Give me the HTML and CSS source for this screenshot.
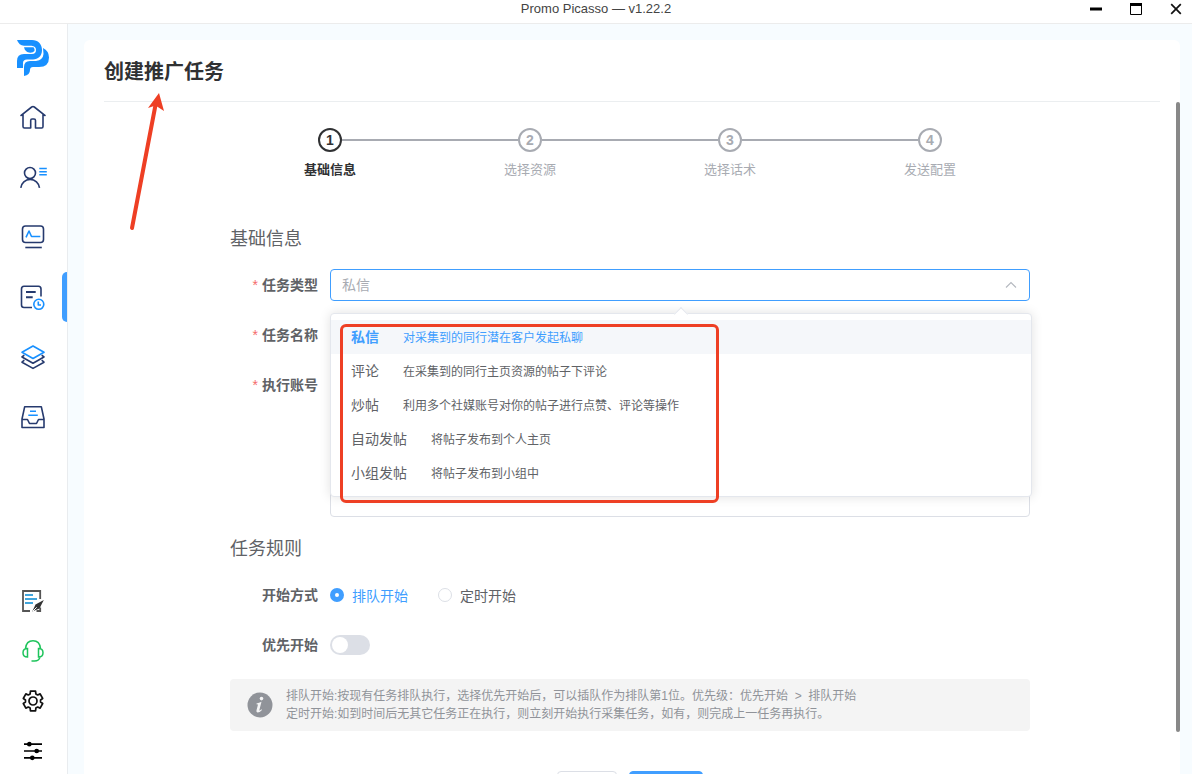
FILE: index.html
```html
<!DOCTYPE html>
<html lang="zh-CN">
<head>
<meta charset="utf-8">
<title>Promo Picasso</title>
<link rel="stylesheet" href="styles.css">
</head>
<body>
<header class="titlebar">
  <span class="titlebar-text">Promo Picasso — v1.22.2</span>
  <div class="window-controls">
    <button type="button" aria-label="最小化"><svg width="12" height="12" viewBox="0 0 12 12"><path d="M0 6h12" stroke="#000" stroke-width="3"/></svg></button>
    <button type="button" aria-label="最大化"><svg width="12" height="12" viewBox="0 0 12 12"><path d="M.5 1v10.500h11V1" fill="none" stroke="#000"/><path d="M0 1.500h12" stroke="#000" stroke-width="3"/></svg></button>
    <button type="button" aria-label="关闭"><svg width="12" height="12" viewBox="0 0 12 12"><path d="M1.200 1.200l9.600 9.600M10.800 1.200l-9.600 9.600" stroke="#111" stroke-width="1.700"/></svg></button>
  </div>
</header>
<div class="shell">
  <aside class="sidebar">
    <div class="logo">
      <svg width="32" height="36" viewBox="0 0 32 36" fill="#1890ff"><path d="M0 0H15C21 0 25 4 25 10C25 16 21 19.500 16 19.500H10Q6 19.500 6 23V28H0V21Q0 14 7 14H15Q19 14 19 10Q19 6 14.500 5.700H7Q2 5.500 0 0Z"/><path d="M7 7.200H16.500Q18 9 17.500 11Q16 13 12 12.600Q8 11.500 7 7.200Z"/><path d="M26 8Q32 11 32 17.500Q32 27 22 27H16Q13 27 13 30Q13 35 7 36V27Q7 21 13 21H19Q26 20 26.500 14Z"/></svg>
    </div>
    <nav class="nav">
      <button type="button" class="nav-item" aria-label="首页"><svg class="line-icon" viewBox="0 0 28 28"><path d="M1.500 12.800L12.700 4Q14 3 15.300 4L26.500 12.800M4 11.500V23.500Q4 25 5.500 25H11.700V17.500Q11.700 16 13 16H15Q16.500 16 16.500 17.500V25H22.700Q24 25 24 23.500V11.500"/></svg></button>
      <button type="button" class="nav-item" aria-label="账号"><svg class="line-icon" viewBox="0 0 28 28"><circle cx="11" cy="10" r="5.500"/><path d="M1.800 24.800A9.400 9.400 0 0 1 20.500 24.800"/><path class="accent" d="M20.300 5.500h7.500M20.300 8.700h7.500M20.300 11.800h7.500"/></svg></button>
      <button type="button" class="nav-item" aria-label="监控"><svg class="line-icon" viewBox="0 0 28 28"><rect x="3.500" y="3" width="21" height="16.500" rx="3"/><path d="M6.300 24.500h16.500"/><path class="accent" d="M7 14.300L10 8l2.500 5.500H21.300"/></svg></button>
      <button type="button" class="nav-item is-active" aria-label="任务"><svg class="line-icon" viewBox="0 0 28 28"><path d="M13 24.500H5Q2.500 24.500 2.500 22V6Q2.500 3.300 5 3.300H19.500Q22 3.300 22 6V13.500"/><path d="M7 9h9.700M7 14.300h6.700" stroke-width="2"/><circle class="accent" cx="19.800" cy="21.300" r="5"/><path class="accent" d="M19.300 18.500V22H22"/></svg></button>
      <button type="button" class="nav-item" aria-label="资源"><svg class="line-icon" viewBox="0 0 28 28"><path class="accent" d="M14 3L25 9.300L14 15.500L3 9.300Z"/><path d="M5.300 12.200L3 14L14 20.200L25 14L22.700 12.200M5.300 17.200L3 19.200L14 25.400L25 19.200L22.700 17.200"/></svg></button>
      <button type="button" class="nav-item" aria-label="收件箱"><svg class="line-icon" viewBox="0 0 28 28"><path d="M5.700 3.700H22.300L25 16V24.500H3V16ZM3 16.500H8.500L10.500 20.500H17.500L19.500 16.500H25"/><path class="accent" d="M11 8.300h6M9.300 12.300h9.500"/></svg></button>
    </nav>
    <div class="tools">
      <button type="button" aria-label="记录"><svg width="22" height="22" viewBox="0 0 22 22" fill="none"><path d="M18.200 9V1H1V21H8M14.500 21H18.200V17.500" stroke="#555" stroke-width="1.800"/><path d="M3 5h8M3 9h12M3 13h8" stroke="#41a5dc" stroke-width="2"/><path d="M21.800 10L13.500 14.500L10.300 21.500L17.500 18.500Z" fill="#333"/><path d="M11 21l3.700-3.700" stroke="#fff" stroke-width="1"/></svg></button>
      <button type="button" aria-label="客服"><svg width="22" height="22" viewBox="0 0 22 22" fill="none" stroke="#1fc45c" stroke-width="1.500"><path d="M3.500 8.500C4 3.500 7 .8 11 .8S18 3.500 18.500 8.500M5.500 8.500V17C2.500 17 1 15.200 1 12.700S2.500 8.500 5.500 8.500ZM16.500 8.500V17C19.500 17 21 15.200 21 12.700S19.500 8.500 16.500 8.500ZM18 16.800C17.500 19.500 15.500 21 12.500 21H9.500"/></svg></button>
      <button type="button" aria-label="设置"><svg width="22" height="22" viewBox="0 0 22 22" fill="none" stroke="#111" stroke-width="1.700" stroke-linejoin="round"><path d="M8.150 3.950L8.440 1.200H13.560L13.850 3.950L15.680 5.010L18.150 3.900L20.700 8.500L18.530 9.940V12.060L20.700 13.500L18.150 18.100L15.680 16.990L13.850 18.050L13.560 20.800H8.440L8.150 18.050L6.320 16.990L3.850 18.100L1.300 13.500L3.470 12.060V9.940L1.300 8.500L3.850 3.900L6.320 5.010Z"/><circle cx="11" cy="11" r="4"/></svg></button>
      <button type="button" aria-label="偏好"><svg width="22" height="22" viewBox="0 0 22 22" fill="#000" stroke="#000" stroke-width="1.700"><path d="M2 4.200h18M2 11h18M2 17.800h18"/><circle cx="7.300" cy="4.200" r="1.500"/><circle cx="14.700" cy="11" r="1.500"/><circle cx="10.300" cy="17.800" r="1.500"/></svg></button>
    </div>
  </aside>
  <main class="main">
    <section class="card">
      <h1 class="card-title">创建推广任务</h1>
      <svg class="note-arrow" width="40" height="140" viewBox="0 0 40 140"><path d="M7 135L30.500 12" stroke="#ee3f24" stroke-width="4" stroke-linecap="round"/><path d="M34 0L23 15L30.500 12.500L39 18Z" fill="#ee3f24"/></svg>
      <div class="scroll">
        <div class="content">
          <ol class="steps">
            <li class="step is-current"><span class="step-num">1</span><span class="step-name">基础信息</span></li>
            <li class="step"><span class="step-num">2</span><span class="step-name">选择资源</span></li>
            <li class="step"><span class="step-num">3</span><span class="step-name">选择话术</span></li>
            <li class="step"><span class="step-num">4</span><span class="step-name">发送配置</span></li>
          </ol>
          <form class="form">
            <h2 class="section-title">基础信息</h2>
            <div class="row">
              <label class="label required" for="type">任务类型</label>
              <div class="field select-wrap">
                <select id="type" class="input select"><option>私信</option><option>评论</option><option>炒帖</option><option>自动发帖</option><option>小组发帖</option></select>
                <svg class="chevron" width="12" height="8" viewBox="0 0 12 8"><path d="M1 6.500L6 1.500L11 6.500" fill="none" stroke="#b4b8bf" stroke-width="1.100"/></svg>
                <div class="popper">
                  <ul class="options" role="listbox" aria-label="任务类型">
                    <li class="option is-selected" role="option" aria-selected="true"><span>私信</span><small>对采集到的同行潜在客户发起私聊</small></li>
                    <li class="option" role="option"><span>评论</span><small>在采集到的同行主页资源的帖子下评论</small></li>
                    <li class="option" role="option"><span>炒帖</span><small>利用多个社媒账号对你的帖子进行点赞、评论等操作</small></li>
                    <li class="option" role="option"><span>自动发帖</span><small>将帖子发布到个人主页</small></li>
                    <li class="option" role="option"><span>小组发帖</span><small>将帖子发布到小组中</small></li>
                  </ul>
                  <div class="note-box"></div>
                </div>
              </div>
            </div>
            <div class="row">
              <label class="label required" for="name">任务名称</label>
              <div class="field"><input id="name" class="input" type="text"></div>
            </div>
            <div class="row">
              <label class="label required" for="accounts">执行账号</label>
              <div class="field"><textarea id="accounts" class="input accounts"></textarea></div>
            </div>
            <h2 class="section-title">任务规则</h2>
            <div class="row">
              <span class="label" id="start-label">开始方式</span>
              <div class="field radios" role="radiogroup" aria-labelledby="start-label">
                <label class="radio"><input type="radio" name="start" checked><span>排队开始</span></label>
                <label class="radio"><input type="radio" name="start"><span>定时开始</span></label>
              </div>
            </div>
            <div class="row">
              <label class="label" for="priority">优先开始</label>
              <div class="field radios"><input id="priority" class="switch" type="checkbox" role="switch"></div>
            </div>
            <div class="alert">
              <svg width="26" height="26" viewBox="0 0 26 26"><circle cx="13" cy="13" r="12.500" fill="#909399"/><circle cx="14.500" cy="6.600" r="1.800" fill="#f4f4f5"/><path d="M9.500 11.500Q12 10.800 14.500 9.800L12.300 18.200Q12.100 19.300 14.500 17.300L15 18Q12.500 20.700 10.500 20.600Q9 20.300 9.500 18.300L11 12.500L9.500 12.200Z" fill="#f4f4f5"/></svg>
              <p class="alert-text">排队开始:按现有任务排队执行，选择优先开始后，可以插队作为排队第1位。优先级：优先开始 &nbsp;&gt;&nbsp; 排队开始<br>定时开始:如到时间后无其它任务正在执行，则立刻开始执行采集任务，如有，则完成上一任务再执行。</p>
            </div>
            <div class="actions">
              <button type="button" class="btn" aria-label="取消"></button>
              <button type="button" class="btn btn-primary" aria-label="下一步"></button>
            </div>
          </form>
        </div>
        <div class="scrollbar"></div>
      </div>
    </section>
  </main>
</div>
</body>
</html>
```
FILE: styles.css
```css
* { box-sizing: border-box; }
body {
  margin: 0;
  height: 100vh;
  overflow: hidden;
  display: flex;
  flex-direction: column;
  font-family: "Liberation Sans", "Noto Sans CJK SC", sans-serif;
  font-size: 14px;
  color: #606266;
  background: #fff;
}
button, input, select, textarea { font: inherit; }
svg { display: block; }

.titlebar {
  position: relative;
  flex: none;
  display: flex;
  justify-content: center;
  height: 24px;
  border-bottom: 1px solid #ececec;
}
.titlebar-text { font-size: 13px; line-height: 17px; color: #444; }
.window-controls {
  position: absolute;
  top: 3px;
  right: 10px;
  display: flex;
  gap: 28px;
}
.window-controls button, .tools button, .nav-item {
  padding: 0;
  border: 0;
  background: none;
}

.shell { flex: 1; min-height: 0; display: flex; }
.sidebar {
  flex: none;
  width: 68px;
  display: flex;
  flex-direction: column;
  border-right: 1px solid #e9ecef;
}
.logo { height: 63px; padding: 16px 0 0 17px; }
.nav { display: flex; flex-direction: column; }
.nav-item {
  position: relative;
  height: 60px;
  padding-left: 19px;
}
.nav-item.is-active::after {
  content: "";
  position: absolute;
  top: 5px;
  right: 0;
  width: 5px;
  height: 50px;
  border-radius: 5px 0 0 5px;
  background: #409eff;
}
.line-icon {
  width: 28px;
  height: 28px;
  fill: none;
  stroke: #263a6e;
  stroke-width: 1.6px;
  stroke-linejoin: round;
}
.line-icon .accent { stroke: #1890ff; }
.tools {
  margin-top: auto;
  padding: 0 0 12px 22px;
  display: flex;
  flex-direction: column;
  align-items: flex-start;
  gap: 28px;
}

.main {
  flex: 1;
  min-width: 0;
  display: flex;
  padding: 16px 12px 0 16px;
  background: #f7fcff;
}
.card {
  position: relative;
  flex: 1;
  min-width: 0;
  display: flex;
  flex-direction: column;
  border-radius: 6px 6px 0 0;
  background: #fff;
}
.card-title {
  flex: none;
  height: 62px;
  margin: 0 20px;
  border-bottom: 1px solid #ebeef0;
  font-size: 20px;
  line-height: 64px;
  color: #303133;
}
.note-arrow { position: absolute; left: 41px; top: 53px; z-index: 3; }
.scroll { flex: 1; min-height: 0; display: flex; overflow: hidden; }
.scrollbar {
  flex: none;
  width: 4px;
  height: 630px;
  border-radius: 2px;
  background: #888;
}
.content { flex: 1; min-width: 0; padding: 26px 20px 0; }

.steps, .form { max-width: 800px; margin: 0 auto; }
.steps { display: flex; padding: 0; list-style: none; }
.step {
  position: relative;
  flex: 1;
  display: flex;
  flex-direction: column;
  align-items: center;
  color: #a8abb2;
}
.step + .step::before {
  content: "";
  position: absolute;
  top: 11px;
  left: calc(-50% + 12px);
  right: calc(50% + 12px);
  height: 2px;
  background: #a8abb2;
}
.step-num {
  width: 24px;
  height: 24px;
  border: 2px solid;
  border-radius: 50%;
  font-weight: bold;
  line-height: 20px;
  text-align: center;
}
.step-name { margin-top: 8px; font-size: 13px; line-height: 20px; }
.step.is-current { color: #303133; }
.is-current .step-name { font-weight: bold; }

.section-title {
  margin: 0 0 16px;
  font-size: 18px;
  font-weight: normal;
  line-height: 28px;
}
.form { padding-top: 45px; }
.row { display: flex; margin-bottom: 18px; }
.label {
  flex: none;
  width: 100px;
  padding-right: 12px;
  font-weight: bold;
  line-height: 32px;
  text-align: right;
}
.required::before { content: "*"; margin-right: 4px; color: #f56c6c; font-weight: normal; }
.field { flex: 1; min-width: 0; }
.input {
  display: block;
  width: 100%;
  height: 32px;
  padding: 0 11px;
  border: 1px solid #dcdfe6;
  border-radius: 4px;
  background: #fff;
  color: #606266;
  outline: 0;
}
.accounts { height: 148px; resize: none; }
.select-wrap { position: relative; }
.select { appearance: none; border-color: #409eff; color: #a8abb2; }
.chevron { position: absolute; top: 12px; right: 13px; pointer-events: none; }
.popper {
  position: absolute;
  z-index: 2;
  top: 44px;
  left: 0;
  right: -2px;
  padding: 6px 0;
  border: 1px solid #e4e7ed;
  border-radius: 4px;
  background: #fff;
  box-shadow: 0 0 12px rgba(0, 0, 0, .12);
}
.popper::before {
  content: "";
  position: absolute;
  top: -5px;
  left: calc(50% - 5px);
  width: 9px;
  height: 9px;
  border: solid #e4e7ed;
  border-width: 1px 0 0 1px;
  background: #fff;
  transform: rotate(45deg);
}
.options { position: relative; margin: 0; padding: 0; list-style: none; }
.option {
  display: flex;
  align-items: baseline;
  gap: 24px;
  height: 34px;
  padding: 0 20px;
  line-height: 34px;
}
.option small { font-size: 12px; }
.option.is-selected { background: #f5f7fa; color: #409eff; }
.is-selected span { font-weight: bold; }
.note-box {
  position: absolute;
  top: 10px;
  left: 9px;
  width: 379px;
  height: 179px;
  border: 3px solid #ee3f24;
  border-radius: 6px;
}

.radios { display: flex; align-items: center; gap: 30px; height: 32px; }
.radio { display: flex; align-items: center; gap: 8px; }
.radio input {
  appearance: none;
  width: 14px;
  height: 14px;
  margin: 0;
  border: 1px solid #dcdfe6;
  border-radius: 50%;
}
.radio input:checked { border: 5px solid #409eff; }
.radio input:checked + span { color: #409eff; }
.switch {
  appearance: none;
  width: 40px;
  height: 20px;
  margin: 0;
  padding: 2px;
  border-radius: 10px;
  background: #dcdfe6;
}
.switch::before {
  content: "";
  display: block;
  width: 16px;
  height: 16px;
  border-radius: 50%;
  background: #fff;
}
.alert {
  display: flex;
  align-items: center;
  gap: 13px;
  padding: 8px 17px;
  border-radius: 4px;
  background: #f4f4f4;
  color: #909399;
}
.alert-text { margin: 0; font-size: 12px; line-height: 18px; }
.actions { display: flex; justify-content: center; gap: 12px; margin-top: 40px; }
.btn {
  width: 60px;
  height: 32px;
  padding: 0;
  border: 1px solid #dcdfe6;
  border-radius: 4px;
  background: #fff;
}
.btn-primary { width: 74px; border-color: #409eff; background: #409eff; }
```
